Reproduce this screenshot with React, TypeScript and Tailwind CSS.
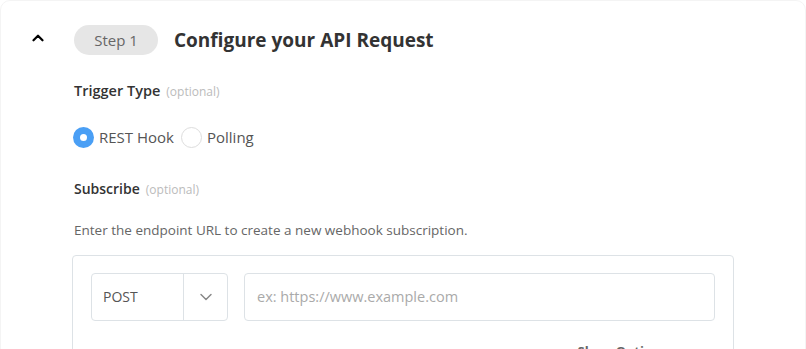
import { ChevronDown, ChevronUp } from 'lucide-react';

export default function App() {
  return (
    <div className="h-[349px] w-[806px] overflow-hidden bg-white font-['Open_Sans',sans-serif]">
      <div className="rounded-[10px] border border-[#f4f4f4] pt-[24px] pr-[71px] pb-[40px]">
        {/* Header row */}
        <div className="flex items-center">
          <div className="-mt-[5px] flex w-[73px] justify-center">
            <ChevronUp className="h-[18px] w-[18px] text-black" strokeWidth={3} />
          </div>
          <span className="flex h-[30px] w-[84px] items-center justify-center rounded-full bg-[#e6e6e6] text-[15px] text-[#666]">
            Step 1
          </span>
          <h2 className="ml-[16px] text-[19px] font-bold text-[#333]">Configure your API Request</h2>
        </div>

        <div className="pl-[71px]">
          {/* Trigger type */}
          <div className="mt-[25px] flex items-baseline gap-[6px] pl-[2px]">
            <span className="text-[14.5px] font-semibold text-[#333]">Trigger Type</span>
            <span className="text-[12px] text-[#bbb]">(optional)</span>
          </div>

          <div className="mt-[24px] flex items-center pl-[1px] text-[15px] text-[#555]">
            <span className="flex h-[21px] w-[21px] items-center justify-center rounded-full bg-[#4a9ff5]">
              <span className="h-[7px] w-[7px] rounded-full bg-white" />
            </span>
            <span className="ml-[5px]">REST Hook</span>
            <span className="ml-[7px] h-[21px] w-[21px] rounded-full border border-[#ddd]" />
            <span className="ml-[5px]">Polling</span>
          </div>

          {/* Subscribe */}
          <div className="mt-[30px] flex items-baseline gap-[6px] pl-[2px]">
            <span className="text-[14px] font-semibold text-[#333]">Subscribe</span>
            <span className="text-[12px] text-[#bbb]">(optional)</span>
          </div>

          <p className="mt-[21px] pl-[2px] text-[13.5px] text-[#666]">
            Enter the endpoint URL to create a new webhook subscription.
          </p>

          <div className="mt-[14px] rounded-[4px] border border-[#dde2e6] px-[18px] pt-[17px] pb-[20px]">
            <div className="flex gap-[16px]">
              <div className="flex h-[48px] w-[137px] rounded-[4px] border border-[#dde2e6]">
                <span className="flex flex-1 items-center pl-[11px] text-[14px] text-[#555]">POST</span>
                <span className="flex w-[44px] items-center justify-center border-l border-[#dde2e6]">
                  <ChevronDown className="h-[20px] w-[20px] text-[#888]" strokeWidth={1.75} />
                </span>
              </div>
              <div className="flex h-[48px] flex-1 items-center rounded-[4px] border border-[#dde2e6] pl-[12px] text-[14.5px] text-[#aaa]">
                ex: https://www.example.com
              </div>
            </div>
            <div className="mt-[21px] flex justify-end pr-[48px]">
              <span className="text-[13px] font-bold text-[#666]">Show Options</span>
            </div>
          </div>
        </div>
      </div>
    </div>
  );
}
